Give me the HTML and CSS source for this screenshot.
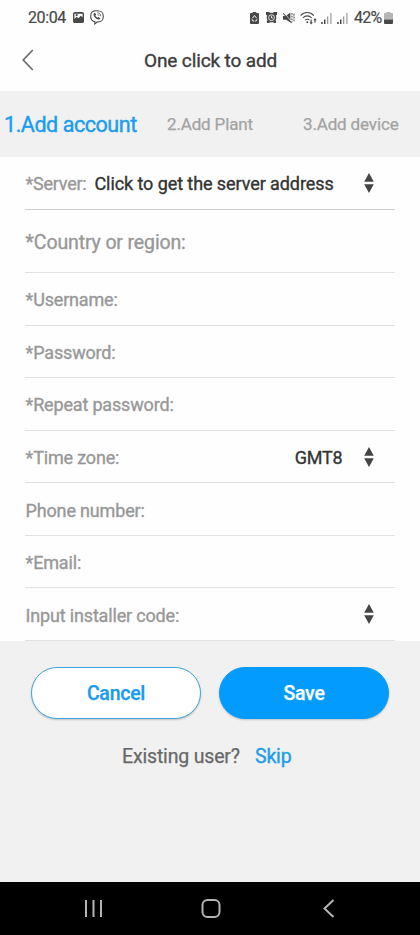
FILE: index.html
```
<!DOCTYPE html>
<html lang="en">
<head>
<meta charset="utf-8">
<meta name="viewport" content="width=device-width, initial-scale=1">
<title>One click to add</title>
<link rel="stylesheet" href="styles.css">
</head>
<body>
<svg class="defs" width="0" height="0" aria-hidden="true">
  <symbol id="sort" viewBox="0 0 10 20"><path d="M5 0L9.800 8.700H.2zM.2 11.300h9.600L5 20z"/></symbol>
  <symbol id="signal" viewBox="0 0 11 11"><path d="M.2 9h1.500v2H.2zM3 6.500h1.500V11H3z"/><path opacity=".55" d="M6 3.500h1.300V11H6zM9.300 0h1.200v11H9.300z"/></symbol>
</svg>
<div class="status">
  <span class="clock">20:04</span>
  <svg class="photo" viewBox="0 0 12 12"><path fill-rule="evenodd" d="M2 0h8q2 0 2 2v8q0 2-2 2H2q-2 0-2-2V2q0-2 2-2zM1.500 2v5.500L4 5.200l1.800 1.600L8.500 4l2 1.800V2z"/><circle cx="4" cy="3.400" r="1.200"/></svg>
  <svg class="viber" viewBox="0 0 14 15"><path class="line" d="M7 .7c4.600 0 6.300 1.400 6.300 5.700S11.500 12 7 12L4.800 14v-2.300C1.800 11 .7 9.500.7 6.400.7 2.100 2.400.7 7 .7z"/><path d="M3.700 3.500l1.100-.7 1.300 1.800-.7 1c.4 1 1.200 1.800 2.100 2.200l1-.8 1.700 1.300-.7 1.100c-2.500.9-6.800-3.300-5.800-5.900z"/><path class="line thin" d="M7.200 2.700c2.200 0 3.500 1.300 3.500 3.400M7.400 4.400c1 .1 1.600.7 1.600 1.600"/></svg>
  <div class="icons">
    <svg class="i-battery" viewBox="0 0 9 12"><path d="M2.700 0h3.600v1H8q1 0 1 1v9q0 1-1 1H1q-1 0-1-1V2q0-1 1-1h1.700z"/><path class="cut" d="M2.300 6.300L4.500 3.500l2.200 2.800M2 7.200L2.800 9h1.300M7 7.200L6.200 9H4.800"/></svg>
    <svg class="i-alarm" viewBox="0 0 12 12"><circle cx="6" cy="6.200" r="5.300"/><path d="M0 3V0h3.500L5 1.500H7L8.500 0H12v3L9 5H3zM1 9h3v3H1zM8 9h3v3H8z"/><circle class="cut" cx="6" cy="6.200" r="3.200"/><path class="cut" d="M6 4.200v2.300h1.700"/></svg>
    <svg class="i-mute" viewBox="0 0 13 12"><path d="M0 3.700h3L8 0v11L3.500 8H0z"/><path class="cut" d="M1 .3l8 9.500"/><path class="line" d="M.3.900l9 10.500"/><path class="line dash" d="M9.700.5v10M11.900 1.500v9"/></svg>
    <svg class="i-wifi" viewBox="0 0 18 14"><path class="line" d="M.7 4.500C4.500.2 10.800.2 14.600 4.500M3 7c2.700-3 6.700-3 9.400 0M5.400 9.400c1.400-1.500 3.200-1.500 4.600 0"/><circle cx="7.700" cy="11.400" r="1"/><path d="M11.200 8.500h1.200v3h1.200L11.800 14 10 11.500h1.200zM15.300 12h1.200V9.500h1.200L15.900 7l-1.800 2.500h1.200z"/></svg>
    <svg class="i-signal"><use href="#signal"/></svg>
    <svg class="i-signal second"><use href="#signal"/></svg>
    <span class="percent">42%</span>
    <svg class="i-level" viewBox="0 0 9 12"><path opacity=".4" d="M2.500 0h4v1H8q1 0 1 1v5.500H0V2q0-1 1-1h1.500z"/><path d="M0 7.500h9V11q0 1-1 1H1q-1 0-1-1z"/></svg>
  </div>
</div>
<header class="header">
  <svg class="back" viewBox="0 0 12 22"><path d="M10.800 1L1.200 11l9.600 10"/></svg>
  <h1 class="title">One click to add</h1>
</header>
<nav class="steps">
  <span class="step active">1.Add account</span>
  <span class="step plant">2.Add Plant</span>
  <span class="step device">3.Add device</span>
</nav>
<main class="form">
  <div class="row server"><span class="label">*Server:</span><span class="value address">Click to get the server address</span><svg class="sort"><use href="#sort"/></svg></div>
  <div class="row country"><span class="label">*Country or region:</span></div>
  <div class="row"><span class="label">*Username:</span></div>
  <div class="row"><span class="label">*Password:</span></div>
  <div class="row"><span class="label">*Repeat password:</span></div>
  <div class="row"><span class="label">*Time zone:</span><span class="value gmt">GMT8</span><svg class="sort"><use href="#sort"/></svg></div>
  <div class="row"><span class="label">Phone number:</span></div>
  <div class="row"><span class="label">*Email:</span></div>
  <div class="row"><span class="label">Input installer code:</span><svg class="sort"><use href="#sort"/></svg></div>
</main>
<section class="actions">
  <div class="buttons"><button class="button cancel">Cancel</button><button class="button save">Save</button></div>
  <p class="existing"><span class="question">Existing user?</span><a class="skip">Skip</a></p>
</section>
<footer class="navbar">
  <svg viewBox="0 0 20 20"><path d="M2 1v17M9.500 1v17M17 1v17"/></svg>
  <svg viewBox="0 0 20 20"><rect x="1.500" y="1" width="17" height="17" rx="5"/></svg>
  <svg viewBox="0 0 20 20"><path d="M15.500 1L6.500 9.500l9 8.500"/></svg>
</footer>
</body>
</html>
```
FILE: styles.css
```
* { box-sizing: border-box; }
body {
  margin: 0;
  height: 935px;
  display: flex;
  flex-direction: column;
  background: #fefefe;
  color: #3c3c3c;
  font-family: Roboto, sans-serif;
  overflow: hidden;
}
svg { display: block; flex: none; }
.defs { position: absolute; }
.status {
  height: 35px;
  flex: none;
  display: flex;
  align-items: center;
  padding-left: 28px;
  font-size: 16px;
  color: #484848;
  fill: #484848;
  -webkit-text-stroke: .2px;
}
.clock { width: 45px; letter-spacing: -.4px; }
.photo { width: 11px; height: 11px; }
.viber { width: 14px; height: 15px; margin-left: 6px; }
.line { fill: none; stroke: #484848; stroke-width: 1.1; }
.thin { stroke-width: .7; }
.cut { fill: none; stroke: #fff; stroke-width: .9; }
.dash { stroke-dasharray: 2 1; }
.icons { display: flex; align-items: center; margin-left: 146px; }
.i-battery { width: 9px; height: 12px; }
.i-alarm { width: 11px; height: 11px; margin-left: 7px; }
.i-mute { width: 12px; height: 12px; margin-left: 6px; }
.i-wifi { width: 17px; height: 14px; margin-left: 5px; }
.i-signal { width: 11px; height: 11px; margin: 2px 0 0 4px; }
.second { margin-left: 5px; }
.percent { width: 30px; margin-left: 6px; white-space: nowrap; letter-spacing: -.7px; }
.i-level { width: 9px; height: 12px; }
.header {
  height: 56px;
  flex: none;
  display: flex;
  align-items: center;
  padding: 0 0 6px 22px;
}
.back { width: 12px; height: 22px; fill: none; stroke: #666; stroke-width: 1.6; }
.title {
  margin: 0 0 0 110px;
  font-size: 19px;
  font-weight: 400;
  letter-spacing: -.13px;
  -webkit-text-stroke: .35px;
}
.steps {
  height: 66px;
  flex: none;
  display: flex;
  align-items: center;
  background: #f1f1f1;
  color: #a3a3a3;
  font-size: 17px;
  letter-spacing: -.15px;
  white-space: nowrap;
  padding-left: 4px;
  -webkit-text-stroke: .25px;
}
.active { width: 163px; color: #1a9df0; font-size: 21.5px; letter-spacing: -.45px; -webkit-text-stroke: .4px; }
.plant { width: 136px; }
.form { height: 484px; flex: none; margin: 0 25px; display: flex; flex-direction: column; }
.row {
  flex: 1;
  display: flex;
  align-items: center;
  border-bottom: 1px solid #e1e1e1;
  padding-left: .6px;
  font-size: 18px;
  letter-spacing: -.17px;
  color: #989898;
  white-space: nowrap;
  -webkit-text-stroke: .35px;
}
.label, .value { padding-top: 2px; }
.server { flex: 0 0 53px; border-color: #ccc; }
.server .label { letter-spacing: -.25px; }
.server .label, .server .value { padding-top: 0; }
.country { flex: 0 0 63px; font-size: 19.5px; letter-spacing: -.13px; }
.value { color: #333; }
.address { margin-left: 8px; letter-spacing: -.08px; }
.gmt { margin-left: auto; margin-right: 21px; letter-spacing: -.2px; }
.sort { width: 10px; height: 20px; fill: #444; margin: 0 21.5px 0 auto; }
.gmt + .sort { margin-left: 0; }
.actions { flex: 1; background: #f1f1f1; padding: 26px 30px 0; }
.buttons { display: flex; gap: 18px; padding-left: .5px; }
.button {
  width: 170px;
  height: 52px;
  border: 1px solid #089bfc;
  border-radius: 27px;
  font: 500 19.5px Roboto, sans-serif;
  letter-spacing: -.25px;
  padding: 1px 0 0 1px;
  box-shadow: 0 1px 2px rgba(0,0,0,.2);
  -webkit-text-stroke: .25px;
}
.cancel { background: #fff; color: #169bf0; border-color: #3ea5df; }
.save { background: #049bff; color: #fff; }
.existing {
  margin: 26px 0 0 92px;
  display: flex;
  font-size: 19.5px;
  letter-spacing: -.17px;
  line-height: 24px;
  color: #686868;
  white-space: nowrap;
  -webkit-text-stroke: .25px;
}
.question { width: 133px; }
.skip { color: #229de9; -webkit-text-stroke: .4px; }
.navbar {
  height: 53px;
  flex: none;
  display: flex;
  justify-content: space-between;
  align-items: center;
  background: #000;
  padding: 0 82px 0 84px;
}
.navbar svg { width: 20px; height: 20px; fill: none; stroke: #b5b5b5; stroke-width: 2; }
```
